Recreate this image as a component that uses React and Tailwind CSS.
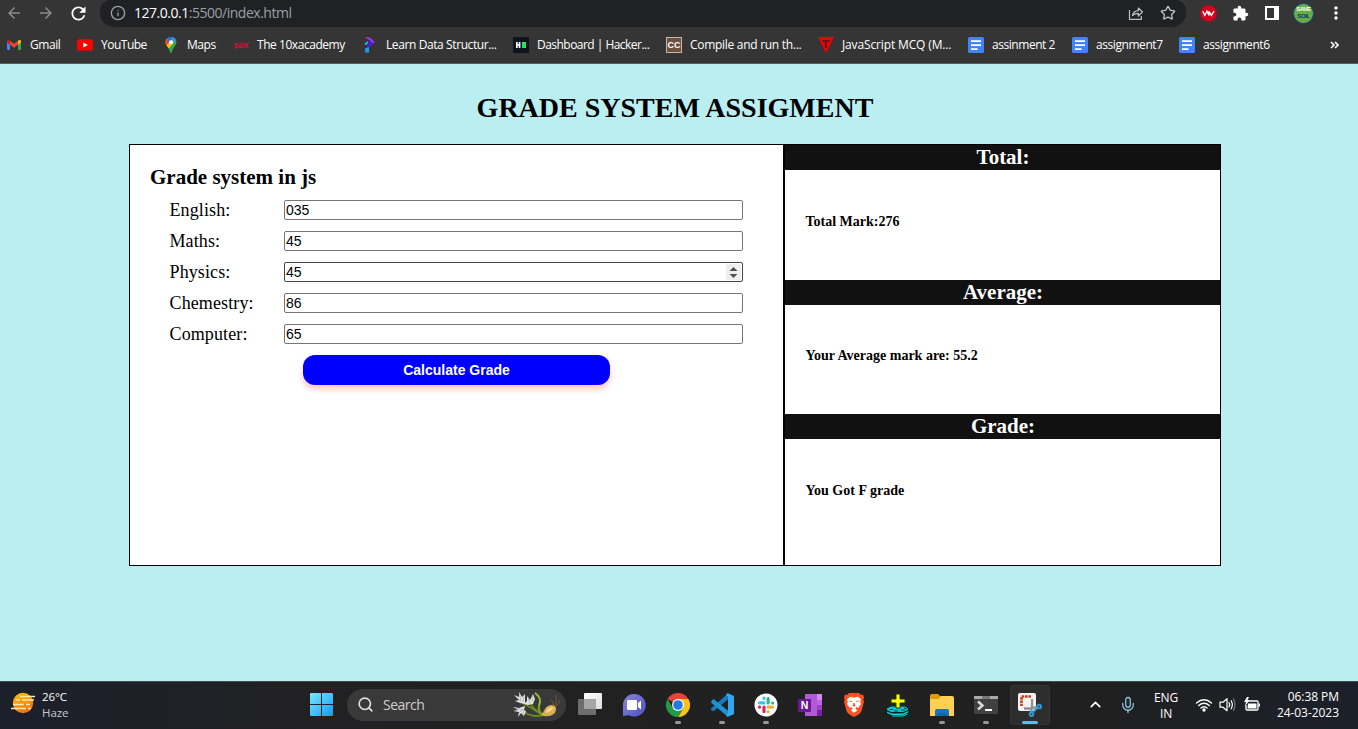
import React from "react";
import { Info, Star, Search, ChevronUp, Mic } from "lucide-react";
import { MdArrowBack, MdArrowForward, MdRefresh, MdExtension, MdMoreVert } from "react-icons/md";

const UI = "font-['Open_Sans','Noto_Sans',sans-serif]";

const Gmail = () => (
  <svg width="16" height="16" viewBox="0 0 16 16">
    <path d="M1 13V4.500l3 2.300V13H2a1 1 0 0 1-1-1z" fill="#4285f4" />
    <path d="M12 6.800l3-2.300V12a1 1 0 0 1-1 1h-2z" fill="#34a853" />
    <path d="M12 3.800l.8-.5c1-.7 2.200-.1 2.200 1.200v1L12 7.800z" fill="#fbbc04" />
    <path d="M4 7.800V3.800l4 3 4-3v4l-4 3z" fill="#ea4335" />
    <path d="M1 5.500v-1c0-1.300 1.200-1.900 2.200-1.200l.8.5v4z" fill="#c5221f" />
  </svg>
);
const YouTube = () => (
  <svg width="16" height="16" viewBox="0 0 16 16">
    <rect x="0" y="2.300" width="16" height="11.500" rx="2.500" fill="#f00" />
    <path d="M6.300 5.500v5l4.500-2.500z" fill="#fff" />
  </svg>
);
const Maps = () => (
  <svg width="16" height="16" viewBox="0 0 16 16">
    <path d="M8 0C5 0 2.600 2.200 2.600 5.200c0 3.200 3.400 4.800 4.600 10 .3 1 1.300 1 1.600 0C10 10 13.400 8.400 13.400 5.200 13.400 2.200 11 0 8 0z" fill="#34a853" />
    <path d="M3.200 7.700C2 5 2.700 3 3.900 1.700L8 5.200 4.500 9.500z" fill="#fbbc04" />
    <path d="M2.700 6.200c-.3-1.700.2-3.300 1.200-4.500L7 4.200 3.500 8.200z" fill="#ea4335" />
    <path d="M3.900 1.700C5.500-.2 8-.3 9.700.3L6 5z" fill="#1a73e8" />
    <path d="M9.700.3c1.500.5 2.700 1.500 3.300 3L9.500 7 7 4z" fill="#4285f4" />
    <path d="M4 9l5.500-6 1 3-4.600 5.500z" fill="#fbbc04" />
    <circle cx="8" cy="5.200" r="2" fill="#fff" />
  </svg>
);
const TenX = () => (
  <svg width="16" height="16" viewBox="0 0 16 16">
    <text x="8" y="10.600" textAnchor="middle" textLength="15" lengthAdjust="spacingAndGlyphs" fontFamily="Liberation Sans" fontWeight="bold" fontSize="7.500" fill="#c91336" stroke="#c91336" strokeWidth=".3">10X</text>
  </svg>
);
const Learn = () => (
  <svg width="16" height="16" viewBox="0 0 16 16">
    <path d="M2.500.5C6-.5 11 1 12.500 6L9 6C8 3.500 6 1.500 2.500.5z" fill="#a238e8" />
    <path d="M6.500 2.300c2 1 3.200 2.700 4.500 4.200-1 2.500-3.500 3.500-6 5.500V8.500c2-.7 2.500-3.500 1.500-6.200z" fill="#4f19dc" />
    <path d="M2.500 6.500L6 4c.5 1.800-.3 3.300-2.500 4.300z" fill="#20b8d8" />
    <path d="M3 11.500l4-1.500v5.500H3z" fill="#2196e8" />
  </svg>
);
const Hacker = () => (
  <svg width="16" height="16" viewBox="0 0 16 16">
    <path d="M0 0h16v16H0z" fill="#0e141e" />
    <path d="M3 5h1.700v2.200h1V5h1.700v6H5.700V8.700h-1V11H3z" fill="#fff" />
    <path d="M9 5h4v6H9z" fill="#1ee36a" />
  </svg>
);
const CC = () => (
  <span className="flex h-4 w-4 items-center justify-center border border-[#c7b8a6] bg-[#6c5140] font-['Liberation_Sans',sans-serif] text-[9px] leading-none font-bold text-white">CC</span>
);
const TIcon = () => (
  <svg width="16" height="16" viewBox="0 0 16 16">
    <path d="M0 0h16L8 16z" fill="#f20000" />
    <path d="M4.500 3h7v1.700H9V11H7V4.700H4.500z" fill="#561b1b" />
  </svg>
);
const Doc = () => (
  <svg width="16" height="16" viewBox="0 0 16 16">
    <rect width="16" height="16" rx="1.500" fill="#4285f4" />
    <path d="M3 3.200h10v1.700H3zM3 7.200h10v1.700H3zM3 11.200h6.500v1.700H3z" fill="#fff" />
  </svg>
);

const bookmarks = [
  [Gmail, "Gmail", "w-[71px]", "tracking-[-0.45px]"],
  [YouTube, "YouTube", "w-[86px]", "tracking-[-0.5px]"],
  [Maps, "Maps", "w-[70px]", "tracking-[-0.45px]"],
  [TenX, "The 10xacademy", "w-[129px]", "tracking-[-0.45px]"],
  [Learn, "Learn Data Structur...", "w-[151px]", "tracking-[-0.4px]"],
  [Hacker, "Dashboard | Hacker...", "w-[153px]", "tracking-[-0.53px]"],
  [CC, "Compile and run th...", "w-[152px]", "tracking-[-0.29px]"],
  [TIcon, "JavaScript MCQ (M...", "w-[150px]", "tracking-[-0.14px]"],
  [Doc, "assinment 2", "w-[104px]", "tracking-[-0.45px]"],
  [Doc, "assignment7", "w-[107px]", "tracking-[-0.43px]"],
  [Doc, "assignment6", "w-[107px]", "tracking-[-0.43px]"],
];

function Browser() {
  return (
    <header className={`h-16 border-b border-[#5c5d5f] bg-[#353535] ${UI}`}>
      <div className="flex h-[27px] items-start">
        <div className="flex h-[26px] w-[100px] items-center gap-[14px] pl-[5px] text-[#8b8b8b]">
          <MdArrowBack size={18} />
          <MdArrowForward size={18} />
          <MdRefresh size={21} className="-ml-px text-white" />
        </div>
        <div className="flex h-[27px] w-[1086px] items-center rounded-b-[14px] rounded-tl-[10px] rounded-tr-[10px] bg-[#202124] pr-[10px] pb-px pl-[10px]">
          <Info size={16} strokeWidth={2} className="text-[#9aa0a6]" />
          <span className="ml-2 text-[14px] leading-5 tracking-[-0.48px] text-[#9aa0a6]"><span className="text-white">127.0.0.1</span>:5500/index.html</span>
          <svg className="ml-auto" width="16" height="16" viewBox="0 0 16 16" fill="none" stroke="#bdc1c6" strokeWidth="1.200">
            <path d="M1.500 5v9.400h11.800V11" />
            <path d="M4.500 10.500c.5-3 2.500-4.700 5.800-4.800V3l4.200 4-4.200 4V8.300c-2.500 0-4.300.7-5.800 2.200z" strokeLinejoin="round" />
          </svg>
          <Star size={16} strokeWidth={2} className="ml-4 text-[#bdc1c6]" />
        </div>
        <div className="flex h-[26px] items-center pl-[14px]">
          <svg width="17" height="17" viewBox="0 0 17 17">
            <circle cx="8.500" cy="8.500" r="8.300" fill="#d5001f" />
            <path d="M2.700 6.200l2.100 4.200L7 6.200l2 4.200V6.200M9 6.200l2.400 4.200 2.600-4.200" fill="none" stroke="#fff" strokeWidth="1.300" />
          </svg>
          <MdExtension size={17} className="ml-[15px] text-white" />
          <svg className="ml-[16px]" width="14" height="14" viewBox="0 0 14 14"><path fill="#fff" d="M0 0h14v14H0zM2 2v10h7V2z" fillRule="evenodd" /></svg>
          <span className="ml-[14px] flex h-[21px] w-[21px] flex-col items-center rounded-full border-[1.500px] border-[#153e86] bg-[#69ad46] pt-[2px] font-['Liberation_Sans',sans-serif] text-[6px] leading-[7px] font-bold tracking-[-0.4px] whitespace-nowrap">
            <span className="text-white">SAVE</span>
            <span className="text-[#0b326d]">SOIL</span>
          </span>
          <MdMoreVert size={20} className="ml-[12px] text-white" />
        </div>
      </div>
      <div className="flex h-9 items-center pl-[6px]">
        {bookmarks.map(([Icon, text, width, track]) => (
          <div key={text} className={`flex h-4 shrink-0 items-center gap-2 ${width}`}>
            <Icon /><span className={`text-[12px] leading-4 whitespace-nowrap text-white ${track}`}>{text}</span>
          </div>
        ))}
        <svg className="ml-[44px]" width="9" height="8" viewBox="0 0 9 8" fill="none" stroke="#fff" strokeWidth="1.600"><path d="M1 1l3 3-3 3M5 1l3 3-3 3" /></svg>
      </div>
    </header>
  );
}

const subjects = [["English:", "035"], ["Maths:", "45"], ["Physics:", "45"], ["Chemestry:", "86"], ["Computer:", "65"]];

function Result({ title, children, height, top }) {
  return (
    <section className={height}>
      <h2 className="h-[25px] bg-[#111] pl-px text-center text-[21px] leading-[25px] font-bold text-white">{title}</h2>
      <p className={`pl-[20.500px] text-[14px] leading-4 font-bold ${top}`}>{children}</p>
    </section>
  );
}

function Content() {
  return (
    <main className="h-[617px] bg-[#bbeef0] pt-[27px] pr-2 font-['Liberation_Serif',serif] text-black">
      <h1 className="h-[53px] text-center text-[28px] leading-[34px] font-bold">GRADE SYSTEM ASSIGMENT</h1>
      <div className="mx-auto flex h-[422px] w-[1092px] bg-white">
        <div className="w-[655px] border border-black px-5 pt-5">
          <h2 className="h-[35px] text-[21px] leading-6 font-bold">Grade system in js</h2>
          <div className="flex flex-col gap-[11px] pl-[19px]">
            {subjects.map(([label, value], i) => (
              <label key={label} className="flex h-5 items-center text-[18px] leading-5">
                <span className="w-[115px] pl-[0.500px] tracking-[0.12px]">{label}</span>
                <span className={`flex h-5 w-[459px] items-center justify-between rounded-[2px] border bg-white px-px font-['Liberation_Sans',sans-serif] text-[14px] leading-4 ${i === 2 ? "border-[#464646]" : "border-[#767676]"}`}>
                  {value}
                  {i === 2 && (
                    <svg width="15" height="16" viewBox="0 0 15 16"><path d="M0 0h15v16H0z" fill="#efefef" /><path d="M3.500 7l4-4 4 4zM3.500 10h8l-4 4z" fill="#505050" /></svg>
                  )}
                </span>
              </label>
            ))}
          </div>
          <button className="mt-[11px] ml-[153px] block h-[30px] w-[307px] rounded-[12px] bg-[#00f] font-['Liberation_Sans',sans-serif] text-[14px] leading-[30px] font-bold text-white shadow-[0_4px_6px_rgba(255,0,0,0.24)]">Calculate Grade</button>
        </div>
        <div className="w-[437px] border border-black">
          <Result title="Total:" height="h-[135px]" top="pt-[44px]">Total Mark:276</Result>
          <Result title="Average:" height="h-[134px]" top="pt-[43px]">Your Average mark are: 55.2</Result>
          <Result title="Grade:" height="h-[151px]" top="pt-[44px]">You Got F grade</Result>
        </div>
      </div>
    </main>
  );
}

const Svg = ({ children }) => <svg width="24" height="24" viewBox="0 0 24 24">{children}</svg>;

const TaskView = () => (
  <Svg>
    <defs><linearGradient id="tv" x1="0" y1="0" x2="1" y2="1"><stop stopColor="#fff" /><stop offset="1" stopColor="#ddd" /></linearGradient></defs>
    <rect x="6" y="0" width="18" height="16" rx="1" fill="url(#tv)" />
    <rect x="0" y="6" width="18" height="16" rx="1" fill="#6d6d6d" />
    <path d="M6 6h12v10H6z" fill="#a5a5a5" />
  </Svg>
);
const Chat = () => (
  <Svg>
    <defs><linearGradient id="ch" x1="0" y1="0" x2="1" y2="1"><stop stopColor="#8a86d4" /><stop offset="1" stopColor="#4e50c8" /></linearGradient></defs>
    <path d="M12 1A11.300 11.300 0 1 1 7 22.200L1 23V12A11.200 11.200 0 0 1 12 1z" fill="url(#ch)" />
    <rect x="5" y="7" width="10" height="10" rx="1.300" fill="#fff" /><path d="M16 10l3-2.500v9L16 14z" fill="#fff" />
  </Svg>
);
const Chrome = () => (
  <Svg>
    <path d="M12 12L1.600 6A12 12 0 0 1 22.400 6z" fill="#ea4335" />
    <path d="M12 12V6h10.400A12 12 0 0 1 12 24l5.200-9z" fill="#fbc116" />
    <path d="M12 12l5.200 3L12 24A12 12 0 0 1 1.600 6l5.200 9z" fill="#239b45" />
    <circle cx="12" cy="12" r="6" fill="#fff" /><circle cx="12" cy="12" r="4.800" fill="#2678e8" />
  </Svg>
);
const Code = () => (
  <Svg>
    <path d="M1 15.500L17.500.8 19 5.500 3.500 18.200 1 17z" fill="#1679b9" />
    <path d="M1 8.500L3.500 6 19 18.500 17.500 23.500 1 9.500z" fill="#1992d6" />
    <path d="M17.500 0L24 3v18l-6.500 3-1.500-2 2-1.500v-17L16 2z" fill="#31a9ee" />
  </Svg>
);
const Slack = () => (
  <Svg>
    <circle cx="12" cy="12" r="11.500" fill="#fff" />
    <g strokeWidth="3.100" strokeLinecap="round">
      <path d="M5.500 9.900h4.500M10 5v.5" stroke="#36c5f0" />
      <path d="M14.100 5.500v4.500M18.600 10h.1" stroke="#2eb67d" />
      <path d="M14.100 14.100h4.500M14.100 18.500v.3" stroke="#ecb22e" />
      <path d="M10 14.100v4.500M5.500 14.100h.1" stroke="#e01e5a" />
    </g>
  </Svg>
);
const OneNote = () => (
  <Svg>
    <path d="M7 1h17v22H7z" fill="#b15ad6" /><path d="M19 1h5v6h-5z" fill="#d58bee" /><path d="M19 7h5v5h-5z" fill="#be65e2" /><path d="M19 12h5v5h-5z" fill="#9b40c0" /><path d="M19 17h5v6h-5z" fill="#7723a1" />
    <rect y="6" width="13" height="13" rx="1" fill="#6b1796" />
    <text x="2.800" y="16.200" fontFamily="Liberation Sans" fontWeight="bold" fontSize="10.500" fill="#fff">N</text>
  </Svg>
);
const Brave = () => (
  <Svg>
    <path d="M7 0h10l2 2 2-.5 1 3-.7 2 .7 2-2.500 9.500c-.5 2-2.500 3-4.500 4.500L12 24l-3-1.500C7 21 5 20 4.500 18L2 8.500l.7-2-.7-2 1-3L5 2z" fill="#ff5021" />
    <path d="M5 6.500l3-2.700 4 1 4-1 3 2.700-.8 2.500.8 2-2.800 4-1.700-1-1.200 1.500 2 2-3.300 2.200L8.700 17.500l2-2L9.500 14l-1.700 1L5 11l.8-2z" fill="#fff" />
    <path d="M7 8l3 .6M17 8l-3 .6M12 10l-1.100 3h2.200z" fill="#ff5021" stroke="#ff5021" strokeWidth=".8" />
  </Svg>
);
const Plus = () => (
  <Svg>
    <path d="M0 16l4-3h16l4 3v4l-5 4H6l-6-3z" fill="#071c1c" />
    <path d="M1 15.500l4-2h14l3 2v1.500l-5 2H5l-4-2z" fill="#00c9d2" />
    <path d="M1 18.500l4.500 2H17l5.500-2.500v1.200L17 22H5.500L1 20z" fill="#0bdde4" />
    <path d="M6 23h11l4.500-2" stroke="#18e1e6" fill="none" />
    <path d="M4 16.500h3M15 17h4M8 18h4M18 15l3 1" stroke="#073b3d" />
    <path d="M10 1h4v5h5v4h-5v5h-4v-5H5V6h5z" fill="#ff0" stroke="#273300" />
  </Svg>
);
const Folder = () => (
  <Svg>
    <path d="M0 3q0-2 2-2h6l3 3-3 2H0z" fill="#e59b08" /><path d="M0 6h8l3-3h11q2 0 2 2v18H0z" fill="#ffd052" />
    <path d="M5 23v-5q0-2 2-2h10q2 0 2 2v5z" fill="#1476bb" /><path d="M7.500 20h9v3h-9z" fill="#0d69a8" />
  </Svg>
);
const Terminal = () => (
  <Svg>
    <rect y="3" width="24" height="18" rx="1.200" fill="#414141" /><path d="M0 3h24v3H0z" fill="#aaa" /><path d="M8 3h8v3H8z" fill="#777" />
    <path d="M4 8.500l4.500 4L4 16.500" fill="none" stroke="#ddd" strokeWidth="2.400" /><path d="M11 16h7v2h-7z" fill="#fff" />
  </Svg>
);
const Snip = () => (
  <Svg>
    <rect width="18" height="18" rx="2" fill="#f2f2f2" />
    <path d="M13 3.500H3.500V13" fill="none" stroke="#c8401c" strokeWidth="2.700" strokeDasharray="2.600 .8" />
    <path d="M14 6v8l-1 5M6 15.500h8l5-2" fill="none" stroke="#8d9499" strokeWidth="2.300" />
    <g fill="none" stroke="#2899d5" strokeWidth="2"><circle cx="21.300" cy="13.500" r="1.800" /><circle cx="13.500" cy="21.300" r="1.800" /><path d="M15 19l4.500-4" /></g>
  </Svg>
);

const Haze = () => (
  <svg width="24" height="22" viewBox="0 0 24 22">
    <defs><linearGradient id="hz" x1="0" y1="0" x2=".4" y2="1"><stop stopColor="#ffc400" /><stop offset="1" stopColor="#f07419" /></linearGradient></defs>
    <circle cx="12" cy="11" r="10.200" fill="url(#hz)" />
    <path d="M9 4.500h15M5 8h4M11 8h12M2 12.500h11M15 12.500h4M0 16.500h15M17 16.500h3" stroke="#ffe9b1" strokeWidth="1.600" />
  </svg>
);
const Plant = () => (
  <svg width="48" height="26" viewBox="0 0 48 26" fill="none">
    <path d="M9 11c7 3 14 8 20 12M18 12c2 5 7 8 12 11M11 20c6 4 13 5 21 3" stroke="#668c1f" strokeWidth="1.800" />
    <path d="M22 1c6 4 6 8 4 13-1 4 1 7 4 9" stroke="#78a020" strokeWidth="2.200" />
    <path d="M22 1c5 4 6 8 4 12" stroke="#b3d143" strokeWidth=".9" />
    <path d="M28 23c3-2 3-7 7-9 4-2 8-1 8 3 0 5-5 8-12 7z" fill="#d9b050" />
    <path d="M33 21c0-4 4-7 8-5-2 2-4 4-8 5z" fill="#f3d98a" />
    <path d="M40 14c1-3-1-5-2-6M41 14c3-3 2-7 2-11M42 15c3-2 4-5 5-7" stroke="#80613a" strokeWidth=".9" />
    <g fill="#e2e2e2">
      <path d="M6 0l3 5 3-3 0 6 0 4-5-1-5-2 4-1-5-5 5 2z" />
      <path d="M14 4l3 4 3-6 2 5-2 5-5 1-4-1 3-3z" />
      <path d="M0 15l6 1 6-2-1 4 2 1-2 5-3-3-3 4 1-5-6-1 5-1z" />
    </g>
    <path d="M6 1l2 7M2 4l7 6M11 3l-1 7M15 5l2 7M20 3l-1 7M2 16l9 2M5 22l5-5M10 23l1-5" stroke="#9ba09b" strokeWidth=".6" />
  </svg>
);

const apps = [
  [TaskView, 0], [Chat, 0], [Chrome, 1], [Code, 1], [Slack, 1], [OneNote, 0], [Brave, 0], [Plus, 0], [Folder, 1], [Terminal, 1], [Snip, 2],
];

function Taskbar() {
  return (
    <footer className={`flex h-12 items-center border-t border-[#414b4b] bg-[linear-gradient(90deg,#1c202b_0%,#212123_22%,#202020_80%,#1c202a_100%)] pb-[2px] text-white ${UI}`}>
      <div className="flex w-[310px] items-center gap-[7px] pl-[11px]">
        <span className="-mt-[3px]"><Haze /></span>
        <div className="text-[11.500px] leading-4 tracking-[-0.1px]"><div>26°C</div><div className="text-[#c7c9cc]">Haze</div></div>
      </div>
      <svg width="23" height="23" viewBox="0 0 23 23">
        <defs><linearGradient id="wn" x1="0" y1="0" x2="1" y2="1"><stop stopColor="#78e8ff" /><stop offset="1" stopColor="#149af5" /></linearGradient></defs>
        <path fill="url(#wn)" d="M1 0h10v11H0V1q0-1 1-1zM12 0h10q1 0 1 1v10H12zM0 12h11v11H1q-1 0-1-1zM12 12h11v10q0 1-1 1H12z" />
      </svg>
      <div className="ml-[14px] flex h-8 w-[219px] items-center rounded-full bg-[#393939] pr-[5px] pl-[10px]">
        <Search size={17} strokeWidth={2.3} className="text-[#e2e2e2]" />
        <span className="ml-[9px] text-[14px] tracking-[-0.5px] text-[#cfcfcf]">Search</span>
        <span className="ml-auto"><Plant /></span>
      </div>
      <div className="ml-[2px] flex">
        {apps.map(([Icon, state], i) => (
          <div key={i} className="flex h-[46px] w-11 items-center justify-center">
            <div className={`flex h-10 w-10 flex-col items-center rounded pt-2 ${state === 2 ? "bg-[#2d2d2d] ring-1 ring-[#343434] ring-inset" : ""}`}>
              <Icon />
              {state > 0 && <span className={`mt-1 h-[3px] shrink-0 rounded-full ${state === 2 ? "w-4 bg-[#58bdea]" : "w-[6px] bg-[#989898]"}`} />}
            </div>
          </div>
        ))}
      </div>
      <ChevronUp size={17} strokeWidth={2.3} className="ml-[35px]" />
      <Mic size={18} strokeWidth={1.7} className="ml-[15px] text-[#8dc7df]" />
      <div className="ml-[15px] w-[28px] pt-[2px] text-center text-[12px] leading-4 tracking-[-0.1px]"><div>ENG</div><div>IN</div></div>
      <svg className="ml-[15px]" width="18" height="18" viewBox="0 0 18 18" fill="none" stroke="#fff" strokeWidth="1.400" strokeLinecap="round">
        <path d="M1.500 7Q9 .7 16.500 7M3.700 9.500Q9 5 14.300 9.500M6 12Q9 9.300 12 12" /><circle cx="9" cy="14" r="1" fill="#fff" />
      </svg>
      <svg className="ml-[6px]" width="17" height="17" viewBox="0 0 17 17" fill="none" stroke="#fff" strokeWidth="1.200" strokeLinejoin="round" strokeLinecap="round">
        <path d="M1 6.200h3L8 2.700v12L4 11.200H1zM10 6.500q1.300 2.200 0 4.400M12.200 4.700q2.200 4 0 8" /><path d="M14.500 3q3 5.700 0 11.400" stroke="#777" />
      </svg>
      <svg className="ml-[7px]" width="18" height="18" viewBox="0 0 18 18">
        <path d="M6 5h8q1 0 1 1v7q0 1-1 1H4q-1 0-1-1V9" fill="none" stroke="#fff" strokeWidth="1.300" /><path d="M5 7.500h8.500v5h-9zM15.500 7.500H17v3h-1.500zM4 1L1 6h2L2 10l5-6H4.500L6 1z" fill="#fff" />
      </svg>
      <div className="ml-auto pr-[19px] text-right text-[12px] leading-4 tracking-[-0.05px]"><div>06:38 PM</div><div>24-03-2023</div></div>
    </footer>
  );
}

export default function App() {
  return (
    <div className="flex h-[729px] w-[1358px] flex-col overflow-hidden">
      <Browser />
      <Content />
      <Taskbar />
    </div>
  );
}
